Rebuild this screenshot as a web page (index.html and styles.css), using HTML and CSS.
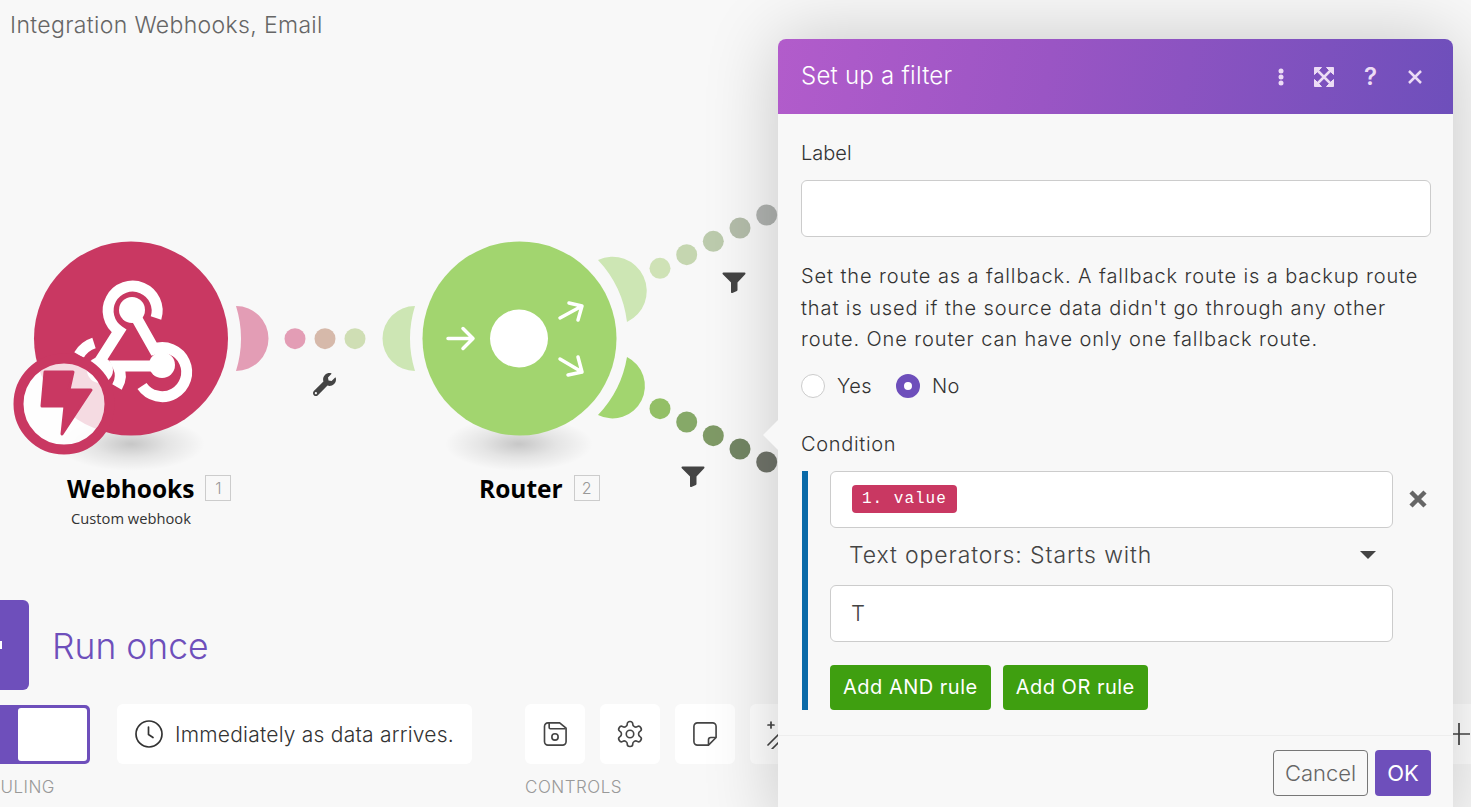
FILE: index.html
```html
<!DOCTYPE html>
<html lang="en">
<head>
    <meta charset="UTF-8">
    <meta name="viewport" content="width=device-width, initial-scale=1.0">
    <title>Integration Webhooks, Email</title>
    <link rel="stylesheet" href="styles.css">
</head>
<body>
    <div class="editor">
        <h1 class="scenario-title">Integration Webhooks, Email</h1>

        <!-- Scenario diagram -->
        <svg class="diagram" width="800" height="560" viewBox="0 0 800 560">
            <defs>
                <radialGradient id="nodeShadow">
                    <stop offset="0" stop-color="#000" stop-opacity=".2"/>
                    <stop offset=".5" stop-color="#000" stop-opacity=".08"/>
                    <stop offset="1" stop-color="#000" stop-opacity="0"/>
                </radialGradient>
                <path id="filterIcon" d="M1.5 1.5H22.5L14.5 10V18L10 20V10Z" fill="#444" stroke="#444" stroke-width="2" stroke-linejoin="round"/>
            </defs>

            <ellipse cx="131" cy="444" rx="74" ry="27" fill="url(#nodeShadow)"/>
            <ellipse cx="519" cy="444" rx="74" ry="27" fill="url(#nodeShadow)"/>

            <!-- links -->
            <circle cx="295" cy="338.7" r="10.5" fill="#e39db5"/>
            <circle cx="325" cy="338.7" r="10.5" fill="#d6b9aa"/>
            <circle cx="355" cy="338.7" r="10.5" fill="#cfdeb4"/>

            <circle cx="660" cy="268.3" r="10.5" fill="#cfe2b6"/>
            <circle cx="686.7" cy="254.7" r="10.5" fill="#c5d6b0"/>
            <circle cx="713.3" cy="241.3" r="10.5" fill="#bccbad"/>
            <circle cx="740" cy="228" r="10.5" fill="#b4bdaa"/>
            <circle cx="766.7" cy="215" r="10.5" fill="#b0b3b0"/>

            <circle cx="660" cy="408.7" r="10.5" fill="#93bf66"/>
            <circle cx="686.7" cy="422" r="10.5" fill="#86a968"/>
            <circle cx="713.3" cy="435.7" r="10.5" fill="#7f9a66"/>
            <circle cx="740" cy="449" r="10.5" fill="#738664"/>
            <circle cx="766.7" cy="462" r="10.5" fill="#70746a"/>

            <!-- Webhooks module -->
            <path d="M236 306A32.5 32.5 0 0 1 236 371A110 110 0 0 0 236 306Z" fill="#e39db5"/>
            <circle cx="131" cy="338.5" r="97" fill="#c93862"/>
            <g fill="none" stroke="#fff" stroke-width="11">
                <path d="M156 318A24.5 24.500 0 1 0 119 331L98 364"/>
                <path d="M132 310L154 349A24.500 24.500 0 1 1 142 386"/>
                <path d="M162 366H118A22 22 0 0 1 117 387"/>
                <path d="M79 355A27 27 0 0 1 94 343"/>
            </g>
            <circle cx="132" cy="310" r="13" fill="#fff"/>
            <circle cx="162" cy="365" r="13" fill="#fff"/>
            <circle cx="100" cy="370" r="13" fill="#fff"/>
            <circle cx="64" cy="404" r="45.500" fill="#fff" fill-opacity=".82" stroke="#c93862" stroke-width="10"/>
            <path d="M45 372H73L69 390H91L62 434L65 406H42Z" fill="#c93862" stroke="#c93862" stroke-width="3" stroke-linejoin="round"/>

            <!-- Router module -->
            <path d="M415 306A32.5 32.5 0 0 0 415 371A110 110 0 0 1 415 306Z" fill="#cde6b4"/>
            <path d="M598 260A33 33 0 0 1 627 322A110 110 0 0 0 598 260Z" fill="#cde6b4"/>
            <path d="M627 357A32.3 32.3 0 0 1 598 415A110 110 0 0 0 627 357Z" fill="#a2d56f"/>
            <circle cx="519.5" cy="338.5" r="97" fill="#a2d56f"/>
            <circle cx="519" cy="338.5" r="29" fill="#fff"/>
            <g fill="none" stroke="#fff" stroke-width="3.500" stroke-linecap="round" stroke-linejoin="round">
                <path d="M448 338.500H473M463 328.500L473 338.500L463 348.500"/>
                <path d="M560 318L582 306M569 303L582 306L578 320"/>
                <path d="M560 359L582 372M578 357L582 372L568 375"/>
            </g>

            <!-- link tools -->
            <svg x="313" y="373" width="23" height="23" viewBox="0 0 512 512">
                <path fill="#444" d="M507.73 109.1c-2.24-9.03-13.54-12.09-20.12-5.51l-74.36 74.36-67.88-11.31-11.31-67.88 74.36-74.36c6.62-6.62 3.43-17.9-5.66-20.16-47.38-11.74-99.55.91-136.58 37.93-39.64 39.64-50.55 97.1-34.05 147.2L18.74 402.76c-24.99 24.99-24.99 65.51 0 90.5 24.99 24.99 65.51 24.99 90.5 0l213.21-213.21c50.12 16.71 107.47 5.68 147.37-34.22 37.07-37.07 49.7-89.32 37.91-136.73zM64 472c-13.25 0-24-10.75-24-24 0-13.26 10.75-24 24-24s24 10.74 24 24c0 13.25-10.75 24-24 24z"/>
            </svg>
            <use href="#filterIcon" x="722" y="272"/>
            <use href="#filterIcon" x="681" y="466"/>
        </svg>

        <div class="node-label node-label-webhooks">
            <div class="node-name"><b>Webhooks</b><span class="node-id">1</span></div>
            <div class="node-sub">Custom webhook</div>
        </div>
        <div class="node-label node-label-router">
            <div class="node-name"><b>Router</b><span class="node-id">2</span></div>
        </div>

        <!-- Bottom toolbar -->
        <div class="run-once">
            <div class="run-btn"><span class="run-tip"></span></div>
            <span class="run-text">Run once</span>
        </div>

        <div class="toolbar">
            <div class="tool-group tool-group-schedule">
                <div class="switch"><span class="switch-off"></span></div>
                <div class="tool-label">SCHEDULING</div>
            </div>
            <div class="tool-group">
                <div class="schedule-card">
                    <svg width="30" height="30" viewBox="0 0 30 30" fill="none" stroke="#333" stroke-width="1.700" stroke-linecap="round" stroke-linejoin="round">
                        <circle cx="15" cy="15" r="13"/>
                        <path d="M14.500 8V15.500L19 18.500"/>
                    </svg>
                    <span>Immediately as data arrives.</span>
                </div>
            </div>
            <div class="tool-group tool-group-controls">
                <div class="tool-row">
                    <div class="tool-box">
                        <svg width="28" height="28" viewBox="0 0 24 24" fill="none" stroke="#444" stroke-width="1.400" stroke-linejoin="round">
                            <path d="M6 2.500H16L21.500 7V18.500A3 3 0 0 1 18.500 21.500H6A3 3 0 0 1 3 18.500V5.500A3 3 0 0 1 6 2.500Z"/>
                            <path d="M7 2.500V6.500A1 1 0 0 0 8 7.500H21"/>
                            <circle cx="12" cy="14.500" r="2.700"/>
                        </svg>
                    </div>
                    <div class="tool-box">
                        <svg width="30" height="30" viewBox="0 0 24 24" fill="none" stroke="#444" stroke-width="1.300" stroke-linejoin="round">
                            <path d="M12.22 2h-.44a2 2 0 0 0-2 2v.18a2 2 0 0 1-1 1.73l-.43.25a2 2 0 0 1-2 0l-.15-.08a2 2 0 0 0-2.73.73l-.22.38a2 2 0 0 0 .73 2.73l.15.1a2 2 0 0 1 1 1.72v.51a2 2 0 0 1-1 1.74l-.15.09a2 2 0 0 0-.73 2.73l.22.38a2 2 0 0 0 2.73.73l.15-.08a2 2 0 0 1 2 0l.43.25a2 2 0 0 1 1 1.73V20a2 2 0 0 0 2 2h.44a2 2 0 0 0 2-2v-.18a2 2 0 0 1 1-1.73l.43-.25a2 2 0 0 1 2 0l.15.08a2 2 0 0 0 2.73-.73l.22-.39a2 2 0 0 0-.73-2.73l-.15-.08a2 2 0 0 1-1-1.74v-.5a2 2 0 0 1 1-1.74l.15-.09a2 2 0 0 0 .73-2.73l-.22-.38a2 2 0 0 0-2.73-.73l-.15.08a2 2 0 0 1-2 0l-.43-.25a2 2 0 0 1-1-1.73V4a2 2 0 0 0-2-2z"/>
                            <circle cx="12" cy="12" r="3"/>
                        </svg>
                    </div>
                    <div class="tool-box">
                        <svg width="28" height="28" viewBox="0 0 24 24" fill="none" stroke="#444" stroke-width="1.400" stroke-linejoin="round">
                            <path d="M5.500 2.500H18.500A3 3 0 0 1 21.500 5.500V15L15 21.500H5.500A3 3 0 0 1 2.500 18.500V5.500A3 3 0 0 1 5.500 2.500Z"/>
                            <path d="M21.500 15H17A2 2 0 0 0 15 17V21.500"/>
                        </svg>
                    </div>
                    <div class="tool-box">
                        <svg width="30" height="30" viewBox="0 0 30 30" fill="none" stroke="#444" stroke-width="1.700" stroke-linejoin="round" stroke-linecap="round">
                            <path d="M3 26L17 12L21 16L7 30"/>
                            <path d="M3 6H9M6 3V9"/>
                        </svg>
                    </div>
                </div>
                <div class="tool-label">CONTROLS</div>
            </div>
        </div>
        <div class="tool-box tool-box-zoom">
            <svg width="30" height="30" viewBox="0 0 30 30" fill="none" stroke="#444" stroke-width="1.700"><path d="M15 4V26M4 15H26"/></svg>
        </div>

        <!-- Filter dialog -->
        <div class="modal">
            <span class="modal-arrow"></span>
            <div class="modal-header">
                <span class="modal-title">Set up a filter</span>
                <div class="modal-actions">
                    <svg width="6" height="18" viewBox="0 0 6 18" fill="#ecdcf5"><circle cx="3" cy="3" r="2.500"/><circle cx="3" cy="9" r="2.500"/><circle cx="3" cy="15" r="2.500"/></svg>
                    <svg width="20" height="20" viewBox="0 0 20 20" fill="#ecdcf5" stroke="#ecdcf5" stroke-linejoin="round">
                        <path d="M.5 .5H7.500L.5 7.500ZM19.500 .5H12.500L19.500 7.500ZM.5 19.500H7.500L.5 12.500ZM19.500 19.500H12.500L19.500 12.500Z"/>
                        <path d="M3 3L17 17M17 3L3 17" fill="none" stroke-width="2.500"/>
                    </svg>
                    <span class="modal-help">?</span>
                    <svg width="16" height="16" viewBox="0 0 16 16" fill="none" stroke="#ecdcf5" stroke-width="2.500"><path d="M2 2L14 14M14 2L2 14"/></svg>
                </div>
            </div>

            <div class="modal-body">
                <label class="field-label">Label</label>
                <div class="text-input"></div>

                <p class="help-text">Set the route as a fallback. A fallback route is a backup route that is used if the source data didn't go through any other route. One router can have only one fallback route.</p>

                <div class="radio-row">
                    <span class="radio"></span><span class="radio-text">Yes</span>
                    <span class="radio radio-on"></span><span class="radio-text">No</span>
                </div>

                <label class="field-label field-label-condition">Condition</label>
                <div class="condition">
                    <div class="condition-row">
                        <div class="text-input text-input-rule"><span class="chip">1. value</span></div>
                        <svg class="rule-remove" width="18" height="18" viewBox="0 0 18 18" fill="none" stroke="#666" stroke-width="4.500"><path d="M2 2L16 16M16 2L2 16"/></svg>
                    </div>
                    <div class="operator">
                        <span>Text operators: Starts with</span>
                        <span class="caret"></span>
                    </div>
                    <div class="text-input text-input-rule text-input-value">T</div>
                    <div class="rule-buttons">
                        <button class="btn-green">Add AND rule</button>
                        <button class="btn-green">Add OR rule</button>
                    </div>
                </div>
            </div>

            <div class="modal-footer">
                <button class="btn-cancel">Cancel</button>
                <button class="btn-ok">OK</button>
            </div>
        </div>
    </div>
</body>
</html>
```
FILE: styles.css
```css
html, body {
    margin: 0;
    height: 100%;
    overflow: hidden;
}

body {
    background-color: #f8f8f8;
    font-family: Inter, "Liberation Sans", sans-serif;
    color: #444;
}

.editor {
    position: relative;
    width: 1471px;
    height: 807px;
    overflow: hidden;
}

.scenario-title {
    margin: 0;
    padding: 11px 0 0 10px;
    font-size: 23px;
    line-height: 28px;
    font-weight: 300;
    letter-spacing: 0.35px;
    color: #666;
}

.diagram {
    position: absolute;
    left: 0;
    top: 0;
}

.node-label {
    position: absolute;
    top: 472px;
    text-align: center;
    color: #000;
}

.node-label-webhooks {
    left: 67px;
}

.node-label-router {
    left: 479px;
}

.node-name {
    display: flex;
    align-items: center;
    gap: 11px;
    height: 32px;
    font-family: "Open Sans", sans-serif;
    font-size: 24.5px;
}

.node-id {
    width: 24px;
    height: 24px;
    border: 1px solid #ccc;
    font-family: Inter, sans-serif;
    font-size: 16px;
    font-weight: 300;
    line-height: 24px;
    color: #999;
}

.node-sub {
    margin: 4px 0 0 4px;
    width: 120px;
    font-family: "Open Sans", sans-serif;
    font-size: 14.7px;
    line-height: 20px;
    white-space: nowrap;
    color: #333;
}

.run-once {
    position: absolute;
    left: 0;
    top: 600px;
    display: flex;
    align-items: center;
    gap: 23px;
}

.run-btn {
    position: relative;
    width: 29px;
    height: 90px;
    background-color: #6e4fbb;
    border-radius: 0 6px 6px 0;
}

.run-tip {
    position: absolute;
    left: 0;
    top: 41px;
    width: 2px;
    height: 8px;
    background-color: #fff;
}

.run-text {
    padding-top: 3px;
    font-size: 35.5px;
    font-weight: 300;
    color: #6e4fbb;
}

.toolbar {
    position: absolute;
    left: 0;
    top: 704px;
    display: flex;
    align-items: flex-start;
}

.tool-group-schedule {
    width: 90px;
    margin-right: 27px;
}

.tool-group-controls {
    margin-left: 53px;
}

.switch {
    display: flex;
    justify-content: flex-end;
    box-sizing: border-box;
    height: 59px;
    margin-top: 1px;
    padding: 3px;
    background-color: #6e4fbb;
    border-radius: 0 5px 5px 0;
}

.switch-off {
    width: 69px;
    background-color: #fff;
    border-radius: 3px;
}

.tool-label {
    margin-top: 13px;
    font-size: 17px;
    line-height: 20px;
    font-weight: 300;
    letter-spacing: 0.5px;
    color: #999;
    white-space: nowrap;
}

.tool-group-schedule .tool-label {
    direction: rtl;
    width: 55px;
}

.schedule-card {
    display: flex;
    align-items: center;
    gap: 11px;
    box-sizing: border-box;
    width: 355px;
    height: 60px;
    padding-left: 17px;
    background-color: #fff;
    border-radius: 6px;
    font-size: 21px;
    font-weight: 300;
    letter-spacing: 0.22px;
    color: #333;
    white-space: nowrap;
}

.tool-row {
    display: flex;
    gap: 15px;
}

.tool-box {
    display: flex;
    align-items: center;
    justify-content: center;
    width: 60px;
    height: 60px;
    background-color: #fff;
    border-radius: 6px;
}

.tool-box-zoom {
    position: absolute;
    left: 1429px;
    top: 704px;
}

/* filter dialog */
.modal {
    position: absolute;
    left: 778px;
    top: 39px;
    width: 675px;
    height: 790px;
    background-color: #f8f8f8;
    border-radius: 8px 8px 0 0;
    box-shadow: 0 0 75px rgba(0, 0, 0, 0.2);
}

.modal-arrow {
    position: absolute;
    left: -15px;
    top: 381px;
    width: 0;
    height: 0;
    border-top: 15px solid transparent;
    border-bottom: 15px solid transparent;
    border-right: 15px solid #f8f8f8;
}

.modal-header {
    display: flex;
    align-items: center;
    justify-content: space-between;
    height: 75px;
    padding: 0 30px 0 23px;
    background: linear-gradient(100deg, #b25ccb 0%, #9a55c4 40%, #6e4fbb 100%);
    border-radius: 8px 8px 0 0;
}

.modal-title {
    margin-top: -2px;
    font-size: 24px;
    font-weight: 300;
    letter-spacing: 0.25px;
    color: #fff;
}

.modal-actions {
    display: flex;
    align-items: center;
    gap: 30px;
}

.modal-help {
    width: 13px;
    font-size: 24px;
    font-weight: 600;
    text-align: center;
    color: #ecdcf5;
}

.modal-body {
    padding: 25px 22px 0 23px;
}

.field-label {
    display: block;
    font-size: 20px;
    line-height: 28px;
    font-weight: 300;
    color: #333;
}

.text-input {
    box-sizing: border-box;
    height: 57px;
    margin-top: 13px;
    background-color: #fff;
    border: 1px solid #ccc;
    border-radius: 6px;
}

.help-text {
    margin: 24px 0 0;
    font-size: 20px;
    line-height: 31.5px;
    font-weight: 300;
    letter-spacing: 0.9px;
    color: #333;
}

.radio-row {
    display: flex;
    align-items: center;
    height: 24px;
    margin-top: 18px;
    font-size: 20px;
    font-weight: 300;
    letter-spacing: 0.4px;
    color: #333;
}

.radio {
    box-sizing: border-box;
    width: 24px;
    height: 24px;
    margin-right: 12px;
    background-color: #fff;
    border: 1px solid #ccc;
    border-radius: 50%;
}

.radio-on {
    border: 8px solid #6e4fbb;
}

.radio-text {
    margin-right: 24px;
}

.field-label-condition {
    margin-top: 32px;
    letter-spacing: 0.67px;
}

.condition {
    box-sizing: border-box;
    height: 239px;
    margin: 13px 0 0 1px;
    padding-left: 22px;
    border-left: 6px solid #0a6aa8;
}

.condition-row {
    display: flex;
    align-items: center;
    gap: 16px;
}

.text-input-rule {
    width: 563px;
    margin-top: 0;
    padding-left: 21px;
}

.condition-row .text-input {
    display: flex;
    align-items: center;
}

.chip {
    height: 28px;
    padding: 0 10px;
    background-color: #c93862;
    border-radius: 4px;
    font-family: "Liberation Mono", monospace;
    font-size: 16px;
    letter-spacing: 1px;
    line-height: 28px;
    color: #fff;
}

.rule-remove {
    flex: none;
}

.operator {
    display: flex;
    align-items: center;
    justify-content: space-between;
    box-sizing: border-box;
    width: 563px;
    height: 57px;
    padding: 0 17px 3px 19px;
    font-size: 23px;
    font-weight: 300;
    letter-spacing: 0.9px;
    color: #444;
}

.caret {
    width: 0;
    height: 0;
    border-left: 8px solid transparent;
    border-right: 8px solid transparent;
    border-top: 8px solid #444;
}

.text-input-value {
    padding-left: 20px;
    font-size: 22px;
    font-weight: 300;
    line-height: 54px;
    color: #444;
}

.rule-buttons {
    display: flex;
    gap: 12px;
    margin-top: 23px;
}

button {
    font-family: Inter, sans-serif;
    font-size: 20px;
    border-radius: 4px;
    cursor: pointer;
}

.btn-green {
    height: 45px;
    padding: 0 13px;
    background-color: #3f9f10;
    border: none;
    font-weight: 400;
    letter-spacing: 0.5px;
    color: #fff;
}

.modal-footer {
    display: flex;
    justify-content: flex-end;
    gap: 7px;
    margin-top: 25px;
    padding: 14px 22px 0 0;
    border-top: 1px solid #eee;
}

.btn-cancel {
    width: 95px;
    height: 46px;
    background-color: #f8f8f8;
    border: 1px solid #777;
    font-size: 22px;
    font-weight: 300;
    color: #666;
}

.btn-ok {
    width: 56px;
    height: 46px;
    background-color: #6e4fbb;
    border: none;
    font-size: 22px;
    color: #fff;
}
```
